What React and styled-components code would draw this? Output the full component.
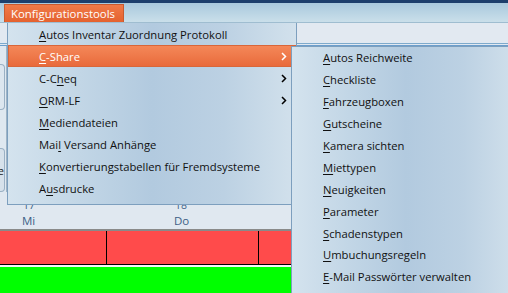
import React from "react";
import styled, { createGlobalStyle } from "styled-components";

const Global = createGlobalStyle`
  html, body { margin: 0; padding: 0; }
  body { font-family: "Open Sans", "Noto Sans", sans-serif; background: #dfe8f0; }
`;

const Screen = styled.div`
  position: relative;
  width: 508px;
  height: 293px;
  overflow: hidden;
  display: flex;
  flex-direction: column;
  background: #dfe8f0;
  font-size: 11px;
`;

const TitleStrip = styled.div`
  height: 3px;
  background: #1d3f6c;
`;

const MenuBar = styled.div`
  height: 20px;
  display: flex;
  align-items: stretch;
  padding: 1px 0 0 4px;
  box-sizing: border-box;
  background: linear-gradient(to bottom, #a9c9dd, #cadfea);
  border-bottom: 1px solid #9fbdd0;
`;

const MenuButton = styled.div`
  width: 120px;
  display: flex;
  align-items: center;
  padding-left: 6px;
  box-sizing: border-box;
  color: #fff;
  font-size: 11.4px;
  background: linear-gradient(to bottom, #f07a48, #e4622f);
  border: 1px solid #c95a2e;
  border-bottom: none;
`;

const Toolbar = styled.div`
  height: 20px;
  background: #e2e9f1;
  border-bottom: 1px solid #7eaacc;
`;

const ToolbarRule = styled.div`
  height: 1px;
  background: #e2e9f1;
  border-bottom: 1px solid #6c9ecc;
`;

const Body = styled.div`
  flex: 1;
  display: flex;
  flex-direction: column;
`;

const TopArea = styled.div`
  height: 146px;
  display: flex;
`;

const SideStrip = styled.div`
  width: 6px;
  display: flex;
  flex-direction: column;
  border-right: 1px solid #9fb4c6;
  background: #dfe8f0;
`;

const SideBox = styled.div`
  margin-top: ${(p) => p.$top}px;
  height: ${(p) => p.$h}px;
  background: ${(p) => p.$bg};
  border: 1px solid #9ab0c4;
  border-left: none;
  border-radius: 0 4px 4px 0;
  width: 4px;
  font-size: 11px;
  line-height: ${(p) => p.$h}px;
  overflow: hidden;
  color: #222;
  direction: rtl;
`;

const TopFill = styled.div`
  flex: 1;
  background: #dfe8f0;
`;

const CalHeader = styled.div`
  height: 37px;
  display: flex;
  background: #e0e8f0;
  border-bottom: 2px solid #8a8a8a;
  color: #3d5f86;
  font-size: 11.5px;
  line-height: 11px;
`;

const DayCell = styled.div`
  width: ${(p) => p.$w}px;
  padding-left: ${(p) => p.$pad}px;
  padding-top: 8px;
  box-sizing: border-box;
  display: flex;
  flex-direction: column;
  gap: 4px;
`;

const Num = styled.span`
  font-size: 10.5px;
  padding-left: 1px;
`;

const RedRow = styled.div`
  height: 33px;
  display: flex;
  background: #ff4b4b;
  border-bottom: 1px solid #000;
`;

const RedCell = styled.div`
  width: ${(p) => p.$w}px;
  border-right: ${(p) => (p.$line ? "1px solid #000" : "none")};
  box-sizing: border-box;
`;

const Gap = styled.div`
  height: 2px;
  background: #f4f6f8;
`;

const GreenRow = styled.div`
  flex: 1;
  background: #00ff00;
`;

const Menu = styled.div`
  position: absolute;
  left: ${(p) => p.$left}px;
  top: ${(p) => p.$top}px;
  width: ${(p) => p.$w}px;
  padding: 0 0 ${(p) => p.$pb}px 0;
  box-sizing: border-box;
  border: 1px solid #7d9fbe;
  border-top: ${(p) => (p.$noTop ? "none" : "1px solid #7d9fbe")};
  background: linear-gradient(
    to right,
    #d4e3ee 0%,
    #c2d6e6 25%,
    #b2cadf 50%,
    #bcd1e3 75%,
    #d2e1ec 100%
  );
  display: flex;
  flex-direction: column;
`;

const Item = styled.div`
  height: ${(p) => p.$h}px;
  flex-shrink: 0;
  display: flex;
  align-items: center;
  padding-left: ${(p) => p.$pl}px;
  padding-right: 8px;
  box-sizing: border-box;
  color: ${(p) => (p.$active ? "#fff" : "#111")};
  font-size: 11.25px;
  white-space: nowrap;
  background: ${(p) =>
    p.$active ? "linear-gradient(to bottom, #f5895a, #e8693a)" : "transparent"};
  box-shadow: ${(p) => (p.$active ? "inset 0 0 0 1px #d8663a" : "none")};
  u {
    text-decoration: underline;
    text-underline-offset: 2px;
    text-decoration-thickness: 1px;
  }
`;

const Label = styled.span`
  flex: 1;
`;

const Chevron = ({ color }) => (
  <svg width="6" height="9" viewBox="0 0 6 9" style={{ marginRight: 1 }}>
    <path d="M1 1 L4.5 4.5 L1 8" fill="none" stroke={color} strokeWidth="1.5" />
  </svg>
);

const mainItems = [
  { pre: "", u: "A", post: "utos Inventar Zuordnung Protokoll" },
  { pre: "", u: "C", post: "-Share", sub: true, active: true },
  { pre: "C-C", u: "h", post: "eq", sub: true },
  { pre: "", u: "O", post: "RM-LF", sub: true },
  { pre: "", u: "M", post: "ediendateien" },
  { pre: "Mai", u: "l", post: " Versand Anhänge" },
  { pre: "", u: "K", post: "onvertierungstabellen für Fremdsysteme" },
  { pre: "A", u: "u", post: "sdrucke" },
];

const subItems = [
  "Autos Reichweite",
  "Checkliste",
  "Fahrzeugboxen",
  "Gutscheine",
  "Kamera sichten",
  "Miettypen",
  "Neuigkeiten",
  "Parameter",
  "Schadenstypen",
  "Umbuchungsregeln",
  "E-Mail Passwörter verwalten",
];

export default function App() {
  return (
    <>
      <Global />
      <Screen>
        <TitleStrip />
        <MenuBar>
          <MenuButton>Konfigurationstools</MenuButton>
        </MenuBar>
        <Toolbar />
        <ToolbarRule />
        <Body>
          <TopArea>
            <SideStrip>
              <SideBox $top={18} $h={46} $bg="#dce6ef" />
              <SideBox $top={38} $h={44} $bg="#d6e1eb">
                e
              </SideBox>
            </SideStrip>
            <TopFill />
          </TopArea>
          <CalHeader>
            <DayCell $w={152} $pad={22}>
              <Num>17</Num>
              <span>Mi</span>
            </DayCell>
            <DayCell $w={140} $pad={22}>
              <Num>18</Num>
              <span>Do</span>
            </DayCell>
          </CalHeader>
          <RedRow>
            <RedCell $w={107} $line />
            <RedCell $w={152} $line />
            <RedCell $w={249} />
          </RedRow>
          <Gap />
          <GreenRow />
        </Body>

        <Menu $left={7} $top={23} $w={290} $pb={5} $noTop>
          {mainItems.map((it, i) => (
            <Item key={i} $h={22} $pl={31} $active={it.active}>
              <Label>
                {it.pre}
                <u>{it.u}</u>
                {it.post}
              </Label>
              {it.sub && <Chevron color={it.active ? "#fff" : "#000"} />}
            </Item>
          ))}
        </Menu>

        <Menu $left={291} $top={46} $w={230} $pb={10}>
          {subItems.map((t, i) => (
            <Item key={i} $h={21.9} $pl={31}>
              <Label>
                <u>{t[0]}</u>
                {t.slice(1)}
              </Label>
            </Item>
          ))}
        </Menu>
      </Screen>
    </>
  );
}
